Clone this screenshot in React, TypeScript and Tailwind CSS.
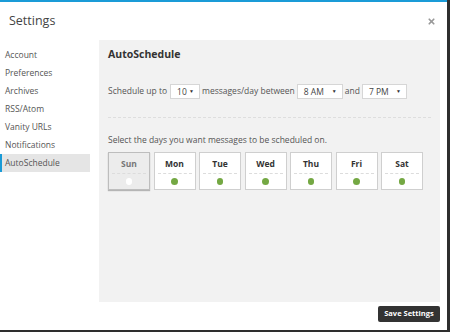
import { X } from 'lucide-react';

const menu = ['Account', 'Preferences', 'Archives', 'RSS/Atom', 'Vanity URLs', 'Notifications', 'AutoSchedule'];
const days = ['Sun', 'Mon', 'Tue', 'Wed', 'Thu', 'Fri', 'Sat'];

function Select({ value, width }: { value: string; width: string }) {
  return (
    <div className={`${width} flex h-[15px] shrink-0 items-center justify-between border border-[#d6d6d6] bg-white pl-[6px] pr-[5px] text-[8.5px] text-[#444]`}>
      <span className="pt-[2px]">{value}</span>
      <span className="text-[5px] text-[#333]">▼</span>
    </div>
  );
}

export default function App() {
  return (
    <div className="h-[332px] w-[450px] bg-[#2e2e2e] font-['Open_Sans',sans-serif]">
      <div className="flex h-[330px] w-[447px] flex-col border-t-2 border-[#1a9bd7] bg-white">
        <div className="flex h-[38px] items-center justify-between pl-[9px] pr-[11px]">
          <span className="text-[12.5px] text-[#444]">Settings</span>
          <X className="h-[9px] w-[9px] text-[#999]" strokeWidth={4.5} />
        </div>

        <div className="flex">
          <div className="w-[90px] pt-[6px]">
            {menu.map((m) => (
              <div
                key={m}
                className={`flex h-[18px] items-center whitespace-nowrap text-[8.5px] text-[#555] ${
                  m === 'AutoSchedule' ? 'border-l-2 border-[#1a9bd7] bg-[#e5e5e5] pl-[3px]' : 'pl-[5px]'
                }`}
              >
                {m}
              </div>
            ))}
          </div>

          <div className="ml-[9px] h-[262px] w-[341px] bg-[#f2f2f2] px-[9px] pt-[6px]">
            <h2 className="text-[10.5px] font-bold leading-[16px] text-[#333]">AutoSchedule</h2>

            <div className="mt-[22px] flex items-center whitespace-nowrap text-[8.5px] text-[#555]">
              <span>Schedule up to</span>
              <div className="ml-[3px]">
                <Select value="10" width="w-[30px]" />
              </div>
              <span className="ml-[2px]">messages/day between</span>
              <div className="ml-[2px]">
                <Select value="8 AM" width="w-[46px]" />
              </div>
              <span className="ml-[2px]">and</span>
              <div className="ml-[2px]">
                <Select value="7 PM" width="w-[45px]" />
              </div>
            </div>

            <div className="mt-[18px] border-t border-dashed border-[#dedede]" />

            <p className="mt-[16px] whitespace-nowrap text-[8.5px] leading-[12px] text-[#555]">Select the days you want messages to be scheduled on.</p>

            <div className="mt-[6px] flex gap-[3.5px]">
              {days.map((d) => {
                const off = d === 'Sun';
                return (
                  <div
                    key={d}
                    className={`flex h-[38px] w-[42px] flex-col items-center border px-[3px] pt-[4px] ${
                      off ? 'border-[#bdbdbd] bg-[#ececec] shadow-[0_1px_1px_rgba(0,0,0,0.25)]' : 'border-[#cfcfcf] bg-white'
                    }`}
                  >
                    <span className={`text-[8.5px] font-bold leading-[14px] ${off ? 'text-[#777]' : 'text-[#333]'}`}>{d}</span>
                    <div className="mt-[2px] w-full border-t border-dashed border-[#dcdcdc]" />
                    <div className={`mt-[4px] h-[6.5px] w-[6.5px] rounded-full ${off ? 'bg-white' : 'bg-[#74a843]'}`} />
                  </div>
                );
              })}
            </div>
          </div>
        </div>

        <div className="flex justify-end pr-[7px] pt-[4px]">
          <button className="h-[16px] w-[62px] rounded-[2px] bg-[#333] text-[7.5px] font-bold text-white">Save Settings</button>
        </div>
      </div>
    </div>
  );
}
